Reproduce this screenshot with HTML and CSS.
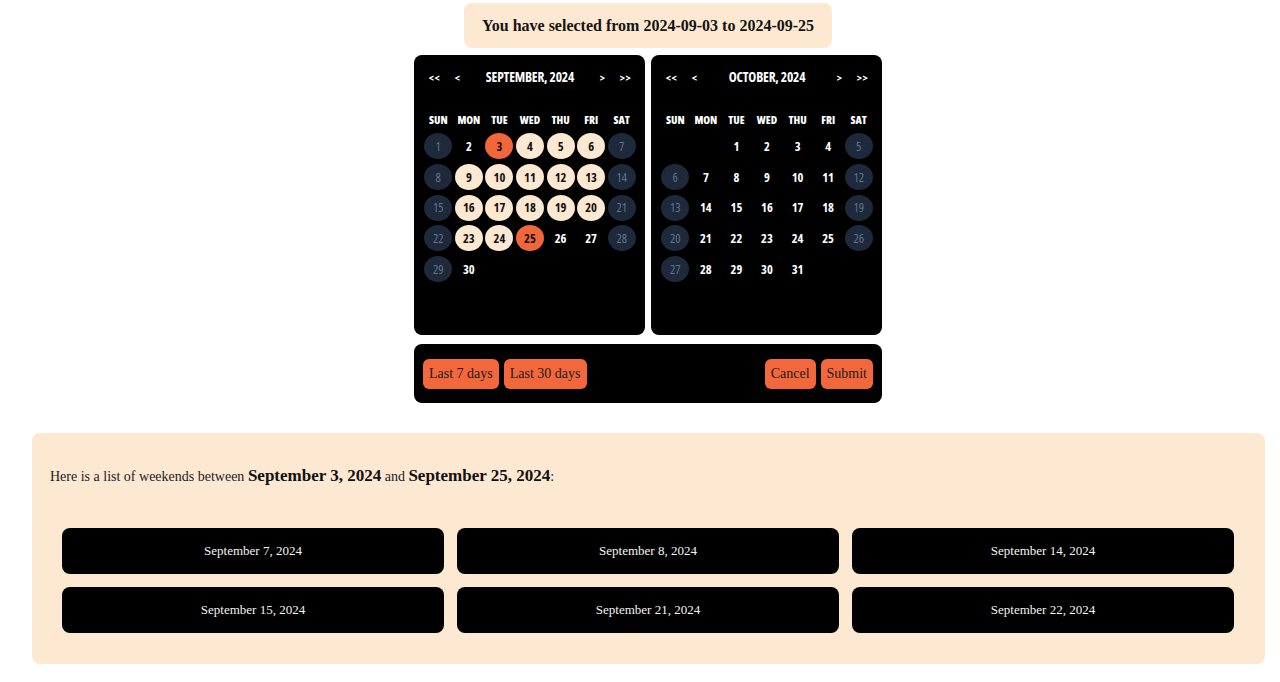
FILE: index.html
```html
<!DOCTYPE html>
<html lang="en">
<head>
<meta charset="utf-8">
<title>Date range</title>
<link rel="stylesheet" href="styles.css">
</head>
<body>
<div class="page">
  <div class="top">
    <div class="banner">You have selected from 2024-09-03 to 2024-09-25</div>
    <div class="picker">
      <div class="months">
        <div class="cal">
          <div class="cal-head">
            <span class="nav">&lt;&lt;</span><span class="nav">&lt;</span>
            <span class="title">September, 2024</span>
            <span class="nav">&gt;</span><span class="nav">&gt;&gt;</span>
          </div>
          <div class="wk"><span>Sun</span><span>Mon</span><span>Tue</span><span>Wed</span><span>Thu</span><span>Fri</span><span>Sat</span></div>
          <div class="days">
            <span class="d we">1</span><span class="d">2</span><span class="d sel">3</span><span class="d rng">4</span><span class="d rng">5</span><span class="d rng">6</span><span class="d we">7</span>
            <span class="d we">8</span><span class="d rng">9</span><span class="d rng">10</span><span class="d rng">11</span><span class="d rng">12</span><span class="d rng">13</span><span class="d we">14</span>
            <span class="d we">15</span><span class="d rng">16</span><span class="d rng">17</span><span class="d rng">18</span><span class="d rng">19</span><span class="d rng">20</span><span class="d we">21</span>
            <span class="d we">22</span><span class="d rng">23</span><span class="d rng">24</span><span class="d sel">25</span><span class="d">26</span><span class="d">27</span><span class="d we">28</span>
            <span class="d we">29</span><span class="d">30</span>
          </div>
        </div>
        <div class="cal">
          <div class="cal-head">
            <span class="nav">&lt;&lt;</span><span class="nav">&lt;</span>
            <span class="title">October, 2024</span>
            <span class="nav">&gt;</span><span class="nav">&gt;&gt;</span>
          </div>
          <div class="wk"><span>Sun</span><span>Mon</span><span>Tue</span><span>Wed</span><span>Thu</span><span>Fri</span><span>Sat</span></div>
          <div class="days">
            <span class="d empty"></span><span class="d empty"></span><span class="d">1</span><span class="d">2</span><span class="d">3</span><span class="d">4</span><span class="d we">5</span>
            <span class="d we">6</span><span class="d">7</span><span class="d">8</span><span class="d">9</span><span class="d">10</span><span class="d">11</span><span class="d we">12</span>
            <span class="d we">13</span><span class="d">14</span><span class="d">15</span><span class="d">16</span><span class="d">17</span><span class="d">18</span><span class="d we">19</span>
            <span class="d we">20</span><span class="d">21</span><span class="d">22</span><span class="d">23</span><span class="d">24</span><span class="d">25</span><span class="d we">26</span>
            <span class="d we">27</span><span class="d">28</span><span class="d">29</span><span class="d">30</span><span class="d">31</span>
          </div>
        </div>
      </div>
      <div class="actions">
        <div class="group">
          <button class="btn">Last 7 days</button>
          <button class="btn">Last 30 days</button>
        </div>
        <div class="group">
          <button class="btn">Cancel</button>
          <button class="btn">Submit</button>
        </div>
      </div>
    </div>
  </div>

  <section class="panel">
    <p class="intro">Here is a list of weekends between <strong>September 3, 2024</strong> and <strong>September 25, 2024</strong>:</p>
    <div class="weekends">
      <div class="card">September 7, 2024</div>
      <div class="card">September 8, 2024</div>
      <div class="card">September 14, 2024</div>
      <div class="card">September 15, 2024</div>
      <div class="card">September 21, 2024</div>
      <div class="card">September 22, 2024</div>
    </div>
  </section>
</div>
</body>
</html>
```

FILE: styles.css
```css
* { box-sizing: border-box; }

body {
  margin: 0;
  background: #ffffff;
  font-family: "Liberation Serif", "DejaVu Serif", serif;
  color: #111;
}

.page {
  padding: 3px 15px 0 32px;
}

.top {
  display: flex;
  flex-direction: column;
  align-items: center;
  padding-right: 1px;
}

.banner {
  width: 368px;
  height: 45px;
  background: #fde8d1;
  border-radius: 8px;
  display: flex;
  align-items: center;
  justify-content: center;
  font-weight: bold;
  font-size: 16px;
  color: #141414;
}

.picker {
  margin-top: 7px;
  width: 468px;
  display: flex;
  flex-direction: column;
  gap: 9px;
}

.months {
  display: flex;
  gap: 6px;
}

.cal {
  flex: 1;
  height: 280px;
  background: #000;
  border-radius: 8px;
  padding: 12px 8px 0 9px;
  font-family: "Open Sans", "DejaVu Sans Condensed", sans-serif;
  font-stretch: 75%;
  font-weight: 700;
  color: #fff;
  text-transform: uppercase;
}

.cal-head {
  height: 20px;
  display: flex;
  align-items: center;
  font-size: 11px;
}

.nav {
  width: 23px;
  text-align: center;
  letter-spacing: 0.5px;
}

.title {
  flex: 1;
  text-align: center;
  font-size: 13.5px;
  letter-spacing: -0.2px;
}

.wk {
  margin-top: 22px;
  height: 20px;
  display: grid;
  grid-template-columns: repeat(7, 1fr);
  align-items: center;
  text-align: center;
  font-size: 11px;
  font-weight: 800;
}

.days {
  margin-top: 2px;
  display: grid;
  grid-template-columns: repeat(7, 1fr);
  grid-auto-rows: 30.7px;
  align-items: center;
  justify-items: center;
  font-size: 12.5px;
}

.d {
  width: 28px;
  height: 26px;
  border-radius: 50%;
  display: flex;
  align-items: center;
  justify-content: center;
  color: #fff;
}

.d.we { background: #1e293b; color: #64748b; font-weight: 500; }
.d.rng { background: #fde8d1; color: #111; }
.d.sel { background: #f2673a; color: #111; }

.actions {
  height: 59px;
  background: #000;
  border-radius: 8px;
  padding: 0 9px;
  display: flex;
  align-items: center;
  justify-content: space-between;
}

.group {
  display: flex;
  gap: 5px;
}

.btn {
  font-family: "Liberation Serif", "DejaVu Serif", serif;
  font-size: 14px;
  color: #1a1a1a;
  background: #f2683c;
  border: 0;
  border-radius: 6px;
  height: 30px;
  padding: 0 6px;
}

.panel {
  margin-top: 30px;
  background: #fde8d1;
  border-radius: 8px;
  padding: 33px 0 31px;
}

.intro {
  margin: 0 0 42px 18px;
  font-size: 14px;
  color: #222;
}

.intro strong {
  font-size: 17px;
  color: #111;
}

.weekends {
  display: grid;
  grid-template-columns: repeat(3, 1fr);
  gap: 13px 13px;
  padding: 0 31px 0 30px;
}

.card {
  height: 46px;
  background: #000;
  color: #f3f3f3;
  border-radius: 8px;
  display: flex;
  align-items: center;
  justify-content: center;
  font-size: 13px;
}
```
